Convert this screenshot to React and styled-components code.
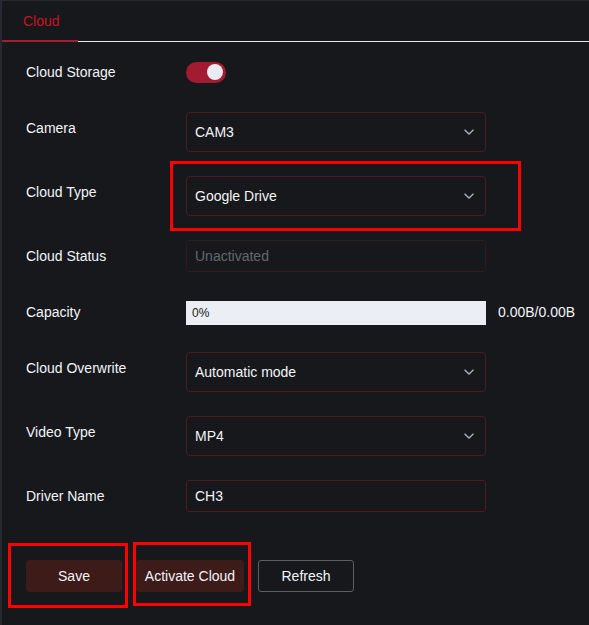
import React from "react";
import styled, { createGlobalStyle } from "styled-components";

const Global = createGlobalStyle`
  html, body { margin: 0; padding: 0; background: #17181c; }
  body { font-family: "Liberation Sans", Arial, sans-serif; }
  * { box-sizing: border-box; }
`;

const Page = styled.div`
  position: relative;
  width: 589px;
  height: 625px;
  background: #17181c;
  border-left: 2px solid #262a30;
  border-top: 1px solid #262a30;
  overflow: hidden;
`;

const TabBar = styled.div`
  display: flex;
  height: 41px;
  border-bottom: 1px solid #e8e8e8;
`;

const Tab = styled.div`
  width: 76px;
  height: 41px;
  padding-left: 21px;
  line-height: 40px;
  font-size: 14px;
  color: #c8141f;
  border-bottom: 2px solid #a51d32;
`;

const Form = styled.div`
  display: flex;
  flex-direction: column;
  padding: 14px 0 0 24px;
`;

const Row = styled.div`
  display: flex;
  align-items: flex-start;
  margin-bottom: 24px;
`;

const Label = styled.div`
  width: 160px;
  line-height: 32px;
  font-size: 14px;
  color: #f2f4f8;
`;

const Field = styled.div`
  height: 32px;
  display: flex;
  align-items: center;
  gap: 12px;
`;

const Toggle = styled.div`
  width: 40px;
  height: 21px;
  border-radius: 11px;
  background: #a31b30;
  display: flex;
  align-items: center;
  justify-content: flex-end;
  padding-right: 3px;
`;

const Knob = styled.div`
  width: 16px;
  height: 16px;
  border-radius: 50%;
  background: #e9ebf2;
`;

const Select = styled.div`
  width: 300px;
  height: 40px;
  border: 1px solid #4a1c1d;
  border-radius: 4px;
  display: flex;
  align-items: center;
  justify-content: space-between;
  padding: 0 10px 0 8px;
  font-size: 14px;
  color: #f2f4f8;
`;

const Input = styled.div`
  width: 300px;
  height: 32px;
  border: 1px solid ${(p) => (p.$disabled ? "#35191a" : "#4a1c1d")};
  border-radius: 3px;
  display: flex;
  align-items: center;
  padding: 0 8px;
  font-size: 14px;
  color: ${(p) => (p.$disabled ? "#64676d" : "#f2f4f8")};
`;

const Bar = styled.div`
  width: 300px;
  height: 24px;
  margin-top: 2px;
  background: #eceef5;
  display: flex;
  align-items: center;
  padding-left: 6px;
  font-size: 12px;
  color: #1a1a1a;
`;

const BarText = styled.span`
  font-size: 14px;
  color: #f2f4f8;
`;

const Buttons = styled.div`
  display: flex;
  gap: 14px;
  margin-top: 24px;
`;

const Button = styled.button`
  width: ${(p) => p.$w || 96}px;
  height: 32px;
  border-radius: 3px;
  font-family: "Liberation Sans", Arial, sans-serif;
  font-size: 14px;
  color: #f2f4f8;
  background: ${(p) => (p.$outline ? "transparent" : "#3d1b19")};
  border: 1px solid ${(p) => (p.$outline ? "#5b5e64" : "#3d1b19")};
  padding: 0;
`;

const Mark = styled.div`
  position: absolute;
  border: 3px solid #ff0000;
`;

const Chevron = () => (
  <svg width="12" height="8" viewBox="0 0 12 8" fill="none">
    <path d="M1.5 1.8 L6 6 L10.5 1.8" stroke="#a9b3c2" strokeWidth="1.3" />
  </svg>
);

export default function App() {
  return (
    <>
      <Global />
      <Page>
        <TabBar>
          <Tab>Cloud</Tab>
        </TabBar>
        <Form>
          <Row>
            <Label>Cloud Storage</Label>
            <Field>
              <Toggle><Knob /></Toggle>
            </Field>
          </Row>
          <Row>
            <Label>Camera</Label>
            <Select>CAM3<Chevron /></Select>
          </Row>
          <Row>
            <Label>Cloud Type</Label>
            <Select>Google Drive<Chevron /></Select>
          </Row>
          <Row>
            <Label>Cloud Status</Label>
            <Input $disabled>Unactivated</Input>
          </Row>
          <Row>
            <Label>Capacity</Label>
            <Field>
              <Bar>0%</Bar>
              <BarText>0.00B/0.00B</BarText>
            </Field>
          </Row>
          <Row>
            <Label>Cloud Overwrite</Label>
            <Select>Automatic mode<Chevron /></Select>
          </Row>
          <Row>
            <Label>Video Type</Label>
            <Select>MP4<Chevron /></Select>
          </Row>
          <Row>
            <Label>Driver Name</Label>
            <Input>CH3</Input>
          </Row>
          <Buttons>
            <Button>Save</Button>
            <Button $w={108}>Activate Cloud</Button>
            <Button $outline>Refresh</Button>
          </Buttons>
        </Form>
        <Mark style={{ left: 168, top: 160, width: 351, height: 70 }} />
        <Mark style={{ left: 6, top: 542, width: 120, height: 65 }} />
        <Mark style={{ left: 131, top: 541, width: 118, height: 64 }} />
      </Page>
    </>
  );
}
